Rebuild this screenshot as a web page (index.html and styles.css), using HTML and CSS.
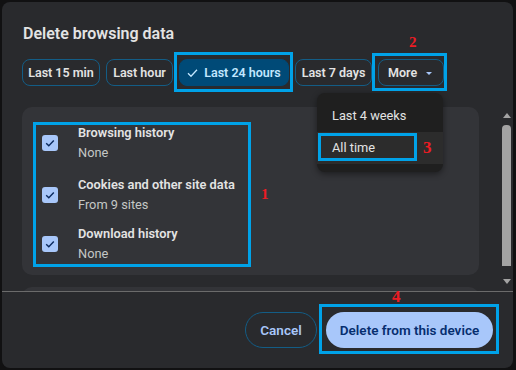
FILE: index.html
```html
<!DOCTYPE html>
<html>
<head>
<meta charset="utf-8">
<link rel="stylesheet" href="styles.css">
</head>
<body>
<div class="dialog">
  <div class="title">Delete browsing data</div>
  <div class="chips">
    <div class="chip c1">Last 15 min</div>
    <div class="chip c2">Last hour</div>
    <div class="chip c3 selected"><svg class="tick" width="11" height="10" viewBox="0 0 11 10"><polyline points="1,5.2 4,8.2 10,1.8" fill="none" stroke="#c2e7ff" stroke-width="1.3"/></svg>Last 24 hours</div>
    <div class="chip c4">Last 7 days</div>
    <div class="chip c5 more">More<span class="caret"></span></div>
  </div>
  <div class="scroll">
    <div class="cards">
      <div class="card">
        <div class="row">
          <span class="box"><svg width="16" height="16" viewBox="0 0 16 16"><polyline points="4.2,8.3 6.8,10.8 11.8,5.6" fill="none" stroke="#0b2a5e" stroke-width="1.4"/></svg></span>
          <div class="label"><div class="name">Browsing history</div><div class="sub">None</div></div>
        </div>
        <div class="row r2">
          <span class="box"><svg width="16" height="16" viewBox="0 0 16 16"><polyline points="4.2,8.3 6.8,10.8 11.8,5.6" fill="none" stroke="#0b2a5e" stroke-width="1.4"/></svg></span>
          <div class="label"><div class="name">Cookies and other site data</div><div class="sub">From 9 sites</div></div>
        </div>
        <div class="row r3">
          <span class="box"><svg width="16" height="16" viewBox="0 0 16 16"><polyline points="4.2,8.3 6.8,10.8 11.8,5.6" fill="none" stroke="#0b2a5e" stroke-width="1.4"/></svg></span>
          <div class="label"><div class="name">Download history</div><div class="sub">None</div></div>
        </div>
      </div>
      <div class="card next"></div>
    </div>
    <div class="scrollbar">
      <span class="arrow up"></span>
      <span class="thumb"></span>
      <span class="arrow down"></span>
    </div>
  </div>
  <div class="sep"></div>
  <div class="footer">
    <div class="btn cancel">Cancel</div>
    <div class="btn primary">Delete from this device</div>
  </div>
</div>

<div class="menu">
  <div class="item">Last 4 weeks</div>
  <div class="item hover">All time</div>
</div>

<div class="mark m1"></div>
<div class="mark m2"></div>
<div class="mark m3"></div>
<div class="mark m4"></div>
<div class="mark m5"></div>
<div class="num n1">1</div>
<div class="num n2">2</div>
<div class="num n3">3</div>
<div class="num n4">4</div>
</body>
</html>
```
FILE: styles.css
```css
html, body {
  margin: 0;
  padding: 0;
}
body {
  width: 516px;
  height: 370px;
  background: #111112;
  position: relative;
  overflow: hidden;
  font-family: Roboto, "Open Sans", sans-serif;
  color: #e3e3e3;
}
.dialog {
  position: absolute;
  left: 2px;
  top: 2px;
  width: 511px;
  height: 366px;
  background: #292a2d;
  border-radius: 8px;
  display: flex;
  flex-direction: column;
  overflow: hidden;
}
.title {
  margin: 21px 0 0 21px;
  font-size: 16px;
  line-height: 22px;
  font-weight: 600;
  color: #e3e3e3;
}
.chips {
  display: flex;
  margin: 14px 0 0 20px;
  gap: 6px;
}
.chip {
  height: 27px;
  box-sizing: border-box;
  border: 1px solid #135d86;
  border-radius: 8px;
  display: flex;
  align-items: center;
  justify-content: center;
  font-size: 12.5px;
  font-weight: 600;
  color: #e3e3e3;
  white-space: nowrap;
}
.c1 { width: 78px; }
.c2 { width: 67px; }
.c3 { width: 110px; }
.c4 { width: 77px; }
.c5 { width: 66px; }
.chip.selected {
  background: #004a77;
  border-color: #004a77;
  color: #c2e7ff;
}
.tick {
  margin-right: 6px;
}
.chip.more {
  justify-content: flex-start;
  padding-left: 9px;
}
.caret {
  width: 0;
  height: 0;
  border-left: 3px solid transparent;
  border-right: 3px solid transparent;
  border-top: 3px solid #a8c7fa;
  margin: 1px 0 0 9px;
}
.scroll {
  margin-top: 21px;
  height: 184px;
  display: flex;
  overflow: hidden;
}
.cards {
  margin-left: 20px;
  width: 457px;
  display: flex;
  flex-direction: column;
  gap: 12px;
}
.card {
  background: #333438;
  border-radius: 10px;
  height: 168px;
  flex: none;
  padding-top: 11px;
  box-sizing: border-box;
}
.card.next {
  height: 60px;
}
.row {
  height: 50px;
  display: flex;
  align-items: center;
  padding-left: 20px;
}
.row.r2 { height: 51px; margin-top: 1px; }
.row.r3 { height: 48px; }
.box {
  width: 16px;
  height: 16px;
  border-radius: 3px;
  background: #a8c7fa;
  display: block;
  flex: none;
}
.box svg { display: block; }
.label {
  margin-left: 20px;
}
.name {
  font-size: 12.8px;
  line-height: 20px;
  font-weight: 600;
  color: #e3e3e3;
}
.sub {
  font-size: 12.8px;
  line-height: 20px;
  color: #c4c7c5;
}
.scrollbar {
  margin-left: 23px;
  width: 9px;
  display: flex;
  flex-direction: column;
  align-items: center;
  padding-top: 6px;
}
.arrow {
  width: 0;
  height: 0;
  border-left: 4.5px solid transparent;
  border-right: 4.5px solid transparent;
}
.arrow.up {
  border-bottom: 5px solid #a3a3a3;
}
.arrow.down {
  border-top: 5px solid #a3a3a3;
  margin-top: 13px;
}
.thumb {
  margin-top: 7px;
  width: 9px;
  height: 141px;
  background: #a3a3a3;
  border-radius: 4px 4px 0 0;
}
.sep {
  height: 1px;
  background: #6b6b6b;
  flex: none;
}
.footer {
  display: flex;
  justify-content: flex-end;
  padding: 20px 20px 0 0;
  gap: 9px;
}
.btn {
  height: 36px;
  border-radius: 18px;
  box-sizing: border-box;
  display: flex;
  align-items: center;
  justify-content: center;
  font-size: 13.5px;
  font-weight: 600;
  white-space: nowrap;
}
.cancel {
  width: 72px;
  border: 1px solid #135d86;
  color: #a8c7fa;
}
.primary {
  width: 167px;
  background: #a8c7fa;
  color: #062e6f;
}
.menu {
  position: absolute;
  left: 317px;
  top: 93px;
  width: 126px;
  padding: 6px 0 8px;
  background: #1f1f1f;
  border-radius: 8px;
  box-shadow: 0 2px 6px rgba(0,0,0,0.45);
}
.item {
  height: 33px;
  line-height: 33px;
  padding-left: 15px;
  font-size: 12.8px;
  color: #e3e3e3;
}
.item.hover {
  background: #2c2c2c;
  height: 32px;
  line-height: 32px;
}
.mark {
  position: absolute;
  border: 3px solid #00a2e8;
  box-sizing: border-box;
}
.m1 { left: 33px; top: 122px; width: 218px; height: 145px; }
.m2 { left: 174px; top: 52px; width: 119px; height: 40px; }
.m3 { left: 372px; top: 53px; width: 75px; height: 38px; }
.m4 { left: 318px; top: 133px; width: 99px; height: 28px; }
.m5 { left: 319px; top: 304px; width: 180px; height: 50px; }
.num {
  position: absolute;
  font-family: "Liberation Serif", serif;
  font-weight: bold;
  color: #ed1c24;
  line-height: 1;
}
.n1 { left: 261px; top: 187px; font-size: 15px; }
.n2 { left: 409px; top: 35px; font-size: 15px; }
.n3 { left: 423px; top: 139px; font-size: 17px; }
.n4 { left: 392px; top: 288px; font-size: 17px; }
```
